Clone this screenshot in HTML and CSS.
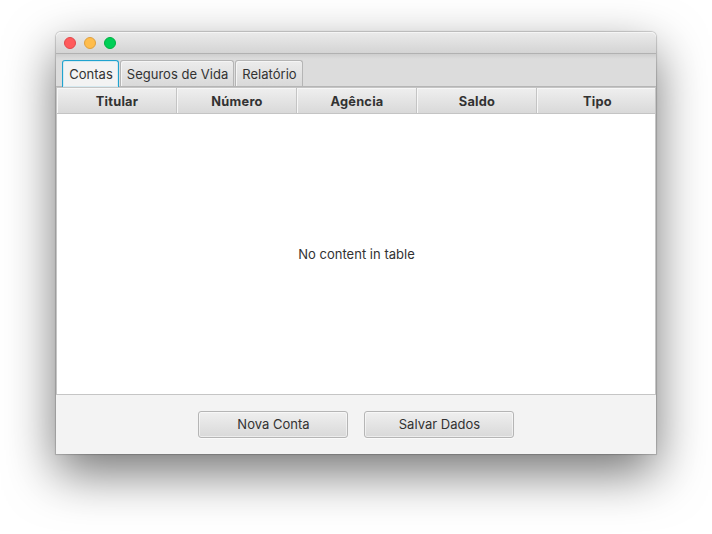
FILE: index.html
```html
<!DOCTYPE html>
<html lang="pt-BR">
<head>
<meta charset="utf-8">
<title>Contas</title>
<link rel="stylesheet" href="styles.css">
</head>
<body>
<main class="window">
  <header class="titlebar">
    <span class="light close"></span>
    <span class="light minimize"></span>
    <span class="light zoom"></span>
  </header>
  <nav class="tabs">
    <div class="tab active"><span>Contas</span></div>
    <div class="tab insurance"><span>Seguros de Vida</span></div>
    <div class="tab report"><span>Relatório</span></div>
  </nav>
  <section class="table">
    <div class="columns">
      <div class="column">Titular</div>
      <div class="column">Número</div>
      <div class="column">Agência</div>
      <div class="column">Saldo</div>
      <div class="column">Tipo</div>
    </div>
    <div class="empty">No content in table</div>
  </section>
  <footer class="actions">
    <button class="button">Nova Conta</button>
    <button class="button">Salvar Dados</button>
  </footer>
</main>
</body>
</html>
```
FILE: styles.css
```css
* { box-sizing: border-box; }
body {
  margin: 0;
  height: 534px;
  padding: 32px 56px 80px;
  background: #fff;
  overflow: hidden;
  font: 13px/16px Inter, "Liberation Sans", sans-serif;
  letter-spacing: .02px;
  color: #323232;
}
.window {
  width: 600px;
  height: 422px;
  display: flex;
  flex-direction: column;
  background: #f3f3f3;
  border-radius: 5px 5px 0 0;
  box-shadow: 0 0 1px 1px rgba(0,0,0,.18), 0 19px 50px rgba(0,0,0,.55);
}
.titlebar {
  height: 22px;
  display: flex;
  align-items: center;
  gap: 8px;
  padding-left: 8px;
  border-radius: 5px 5px 0 0;
  border-bottom: 1px solid #b1b1b1;
  background: linear-gradient(#ebebeb, #d4d4d4);
  box-shadow: inset 0 1px #f5f5f5;
}
.light { width: 12px; height: 12px; border-radius: 50%; border: 1px solid; }
.close { background: #ff5b5c; border-color: #e2484b; }
.minimize { background: #ffbd4c; border-color: #dfa03f; }
.zoom { background: #00cf57; border-color: #00b141; }
.tabs {
  height: 33px;
  display: flex;
  gap: 1px;
  padding: 6px 6px 0;
  background: linear-gradient(#cecece, #dcdcdc 5px, #dcdcdc);
  border-bottom: 1px solid #b5b5b5;
}
.tab {
  height: 26px;
  display: flex;
  justify-content: center;
  padding: 5px 0 0 1px;
  border: 1px solid #b5b5b5;
  border-bottom: 0;
  border-radius: 3px 3px 0 0;
  background: linear-gradient(#ececec, #d9d9d9);
  box-shadow: inset 1px 1px #f5f5f5;
  white-space: nowrap;
}
.active {
  width: 57px;
  height: 27px;
  border-color: #20a3cf;
  background: #f3f3f3;
  box-shadow: inset 0 0 0 1px #d5e9f0;
}
.insurance { width: 114px; }
.report { width: 68px; }
.table {
  height: 308px;
  display: flex;
  flex-direction: column;
  border: 1px solid #c5c5c5;
  background: #fff;
}
.columns {
  height: 26px;
  display: flex;
  overflow: hidden;
  background: linear-gradient(#efefef, #d9d9d9);
  border-bottom: 1px solid #c4c4c4;
}
.column {
  flex: 0 0 120px;
  padding: 6px 0 0 1px;
  text-align: center;
  font-weight: 700;
  font-size: 12.8px;
  letter-spacing: .25px;
  border-right: 1px solid #c4c4c4;
  box-shadow: inset 1px 1px #f7f7f7;
}
.column:last-child { border-right: 0; }
.empty {
  flex: 1;
  display: flex;
  align-items: center;
  justify-content: center;
  padding-left: 1px;
}
.actions { display: flex; justify-content: center; gap: 16px; padding-top: 16px; }
.button {
  width: 150px;
  height: 27px;
  padding: 0 0 2px 1px;
  border: 1px solid #b5b5b5;
  border-radius: 3px;
  background: linear-gradient(#efefef, #d9d9d9);
  box-shadow: inset 0 0 0 1px rgba(255,255,255,.5), 0 1px #fafafa;
  color: inherit;
  font: inherit;
  letter-spacing: inherit;
}
```
